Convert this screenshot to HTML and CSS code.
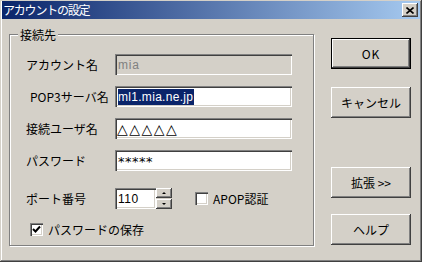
FILE: index.html
```html
<!DOCTYPE html>
<html lang="ja">
<head>
  <meta charset="UTF-8" />
  <title>アカウントの設定</title>
  <link rel="stylesheet" href="styles.css">
</head>
<body>

  <div class="window">
    <div class="titlebar">
      <span class="title">アカウントの設定</span>
      <div class="close">
        <svg width="8" height="7" viewBox="0 0 8 7">
          <path d="M0.5 0.5 L7.5 6.5 M7.5 0.5 L0.5 6.5" stroke="#000" stroke-width="1.6" fill="none"/>
        </svg>
      </div>
    </div>

    <div class="client">
      <div class="group">
        <span class="legend">接続先</span>

        <div class="row">
          <label>アカウント名</label>
          <div class="field disabled">mia</div>
        </div>
        <div class="row">
          <label class="indent">POP3サーバ名</label>
          <div class="field"><span class="selected">ml1.mia.ne.jp</span></div>
        </div>
        <div class="row">
          <label>接続ユーザ名</label>
          <div class="field tri">△△△△△</div>
        </div>
        <div class="row">
          <label>パスワード</label>
          <div class="field stars">*****</div>
        </div>
        <div class="row port-row">
          <label>ポート番号</label>
          <div class="field port">110</div>
          <div class="spin">
            <div class="spin-btn up"></div>
            <div class="spin-btn down"></div>
          </div>
          <div class="check apop"></div>
          <span class="check-label">APOP認証</span>
        </div>
        <div class="row check-row">
          <div class="check">
            <svg width="9" height="9" viewBox="0 0 9 9">
              <path d="M1 4 L3.5 6.5 L8 1.5" stroke="#000" stroke-width="2" fill="none"/>
            </svg>
          </div>
          <span class="check-label">パスワードの保存</span>
        </div>
      </div>

      <div class="buttons">
        <button class="btn default">OK</button>
        <button class="btn cancel">キャンセル</button>
        <button class="btn expand">拡張 &gt;&gt;</button>
        <button class="btn help">ヘルプ</button>
      </div>
    </div>
  </div>

</body>
</html>
```

FILE: styles.css
```css
body {
  margin: 0;
  background: #d4d0c8;
  font-family: "Noto Sans CJK JP", sans-serif;
  font-size: 12px;
  color: #000;
}

.window {
  width: 422px;
  height: 262px;
  box-sizing: border-box;
  padding: 1px 2px 2px 2px;
  box-shadow: inset -1px -1px #404040, inset 1px 1px #d4d0c8,
              inset -2px -2px #808080, inset 2px 2px #fff;
}

.titlebar {
  height: 18px;
  display: flex;
  align-items: center;
  justify-content: space-between;
  padding: 0 2px 0 1px;
  background: linear-gradient(to right, #0a246a, #a6caf0);
}

.title {
  color: #fff;
  font-size: 12px;
  letter-spacing: -1.2px;
  line-height: 18px;
}

.close {
  width: 16px;
  height: 14px;
  box-sizing: border-box;
  display: flex;
  align-items: center;
  justify-content: center;
  background: #d4d0c8;
  box-shadow: inset -1px -1px #404040, inset 1px 1px #fff,
              inset -2px -2px #808080;
}

.client {
  display: flex;
  align-items: flex-start;
}

.group {
  position: relative;
  width: 305px;
  height: 212px;
  box-sizing: border-box;
  margin: 15px 0 0 7px;
  padding: 19px 0 0 16px;
  border: 1px solid #808080;
  box-shadow: 1px 1px 0 #fff, inset 1px 1px 0 #fff;
  display: flex;
  flex-direction: column;
}

.legend {
  position: absolute;
  top: -8px;
  left: 8px;
  padding: 0 2px;
  line-height: 16px;
  background: #d4d0c8;
}

.row {
  display: flex;
  align-items: center;
  height: 21px;
  margin-bottom: 11px;
}

.row label {
  width: 89px;
  flex-shrink: 0;
}

.row label.indent {
  box-sizing: border-box;
  padding-left: 4px;
}

.field {
  width: 177px;
  height: 21px;
  box-sizing: border-box;
  padding: 0 3px;
  display: flex;
  align-items: center;
  background: #fff;
  line-height: 16px;
  font-family: "Liberation Sans", sans-serif;
  box-shadow: inset 1px 1px #808080, inset 2px 2px #404040,
              inset -1px -1px #fff, inset -2px -2px #d4d0c8;
}

.field.disabled {
  background: #d4d0c8;
  color: #808080;
  letter-spacing: 0.8px;
}

.selected {
  background: #0a246a;
  color: #fff;
  letter-spacing: 0.3px;
  padding-right: 1px;
}

.tri {
  font-family: "DejaVu Sans", sans-serif;
  font-size: 14px;
  letter-spacing: 1.5px;
  padding-left: 2px;
}

.stars {
  font-family: "DejaVu Sans", sans-serif;
  font-size: 13px;
  letter-spacing: 0.5px;
  padding-top: 3px;
}

.port-row {
  margin-top: 6px;
  margin-bottom: 14px;
}

.field.port {
  width: 41px;
  letter-spacing: 0.5px;
}

.spin {
  width: 16px;
  height: 21px;
  display: flex;
  flex-direction: column;
  gap: 1px;
}

.spin-btn {
  position: relative;
  height: 10px;
  background: #d4d0c8;
  box-shadow: inset -1px -1px #404040, inset 1px 1px #fff,
              inset -2px -2px #808080;
}

.spin-btn::after {
  content: "";
  position: absolute;
  left: 6px;
  top: 4px;
  border-left: 2px solid transparent;
  border-right: 2px solid transparent;
}

.spin-btn.up::after {
  border-bottom: 2px solid #000;
}

.spin-btn.down::after {
  border-top: 2px solid #000;
}

.check {
  width: 13px;
  height: 13px;
  box-sizing: border-box;
  flex-shrink: 0;
  display: flex;
  align-items: center;
  justify-content: center;
  background: #fff;
  box-shadow: inset 1px 1px #808080, inset 2px 2px #404040,
              inset -1px -1px #fff, inset -2px -2px #d4d0c8;
}

.check.apop {
  margin-left: 23px;
}

.check-label {
  margin-left: 5px;
}

.check-row {
  height: 13px;
  padding-left: 4px;
}

.buttons {
  display: flex;
  flex-direction: column;
  margin: 19px 0 0 17px;
}

.btn {
  width: 80px;
  height: 31px;
  padding: 0;
  border: none;
  background: #d4d0c8;
  font-family: "Noto Sans CJK JP", sans-serif;
  font-size: 12px;
  color: #000;
  box-shadow: inset -1px -1px #404040, inset 1px 1px #fff,
              inset -2px -2px #808080, inset 2px 2px #d4d0c8;
}

.btn.default {
  border: 1px solid #000;
  letter-spacing: 1px;
}

.btn.cancel {
  margin-top: 18px;
}

.btn.expand {
  margin-top: 49px;
}

.btn.help {
  margin-top: 16px;
}
```
